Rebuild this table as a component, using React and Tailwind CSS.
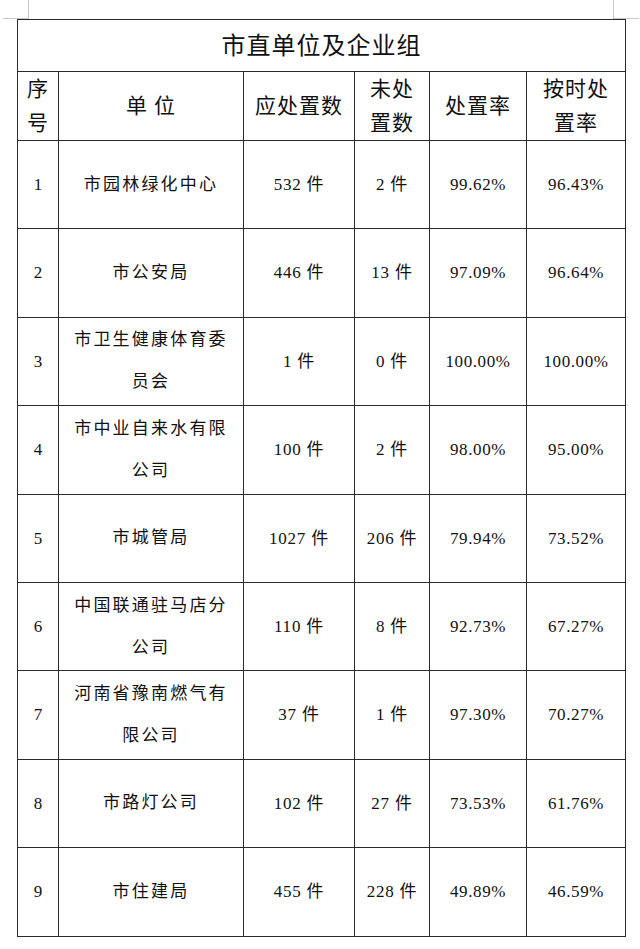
const rows = [
  { no: '1', unit: ['市园林绿化中心'], due: '532 件', left: '2 件', rate: '99.62%', ontime: '96.43%' },
  { no: '2', unit: ['市公安局'], due: '446 件', left: '13 件', rate: '97.09%', ontime: '96.64%' },
  { no: '3', unit: ['市卫生健康体育委', '员会'], due: '1 件', left: '0 件', rate: '100.00%', ontime: '100.00%' },
  { no: '4', unit: ['市中业自来水有限', '公司'], due: '100 件', left: '2 件', rate: '98.00%', ontime: '95.00%' },
  { no: '5', unit: ['市城管局'], due: '1027 件', left: '206 件', rate: '79.94%', ontime: '73.52%' },
  { no: '6', unit: ['中国联通驻马店分', '公司'], due: '110 件', left: '8 件', rate: '92.73%', ontime: '67.27%' },
  { no: '7', unit: ['河南省豫南燃气有', '限公司'], due: '37 件', left: '1 件', rate: '97.30%', ontime: '70.27%' },
  { no: '8', unit: ['市路灯公司'], due: '102 件', left: '27 件', rate: '73.53%', ontime: '61.76%' },
  { no: '9', unit: ['市住建局'], due: '455 件', left: '228 件', rate: '49.89%', ontime: '46.59%' },
]

// cell border shared by all cells
const cell = 'border border-[#2a2a2a] text-center align-middle p-0'

function Head({ lines }) {
  return (
    <th className={`${cell} font-normal text-[21px] leading-[34px] tracking-[1px]`}>
      {lines.map((l, i) => (
        <div key={i}>{l}</div>
      ))}
    </th>
  )
}

export default function App() {
  return (
    <div
      className="relative bg-white w-[640px] h-[949px] pt-[19px] pl-[17px] text-[#111]"
      style={{ fontFamily: '"Liberation Serif", "Noto Sans CJK SC", serif' }}
    >
      {/* page margin marks */}
      <div className="absolute left-[3px] top-[18px] w-[26px] h-px bg-[#c8c8c8]" />
      <div className="absolute left-[28px] top-0 w-px h-[19px] bg-[#c8c8c8]" />
      <div className="absolute left-[613px] top-0 w-px h-[19px] bg-[#c8c8c8]" />
      <div className="absolute left-[613px] top-[18px] w-[26px] h-px bg-[#c8c8c8]" />

      <table className="border-collapse table-fixed w-[608px]">
        <colgroup>
          <col className="w-[41px]" />
          <col className="w-[185px]" />
          <col className="w-[111px]" />
          <col className="w-[75px]" />
          <col className="w-[97px]" />
          <col className="w-[99px]" />
        </colgroup>
        <thead>
          <tr className="h-[52px]">
            <th colSpan={6} className={`${cell} font-normal text-[24px] tracking-[1px]`}>
              市直单位及企业组
            </th>
          </tr>
          <tr className="h-[68px]">
            <Head lines={['序', '号']} />
            <Head lines={['单 位']} />
            <Head lines={['应处置数']} />
            <Head lines={['未处', '置数']} />
            <Head lines={['处置率']} />
            <Head lines={['按时处', '置率']} />
          </tr>
        </thead>
        <tbody>
          {rows.map((r) => (
            <tr key={r.no} className="h-[88.4px]">
              <td className={`${cell} text-[17px]`}>{r.no}</td>
              <td className={`${cell} text-[17px] leading-[42px] tracking-[2.2px]`}>
                {r.unit.map((l, i) => (
                  <div key={i}>{l}</div>
                ))}
              </td>
              <td className={`${cell} text-[17px] tracking-[0.8px]`}>{r.due}</td>
              <td className={`${cell} text-[17px] tracking-[0.8px]`}>{r.left}</td>
              <td className={`${cell} text-[17px] tracking-[0.6px]`}>{r.rate}</td>
              <td className={`${cell} text-[17px] tracking-[0.6px]`}>{r.ontime}</td>
            </tr>
          ))}
        </tbody>
      </table>
    </div>
  )
}
